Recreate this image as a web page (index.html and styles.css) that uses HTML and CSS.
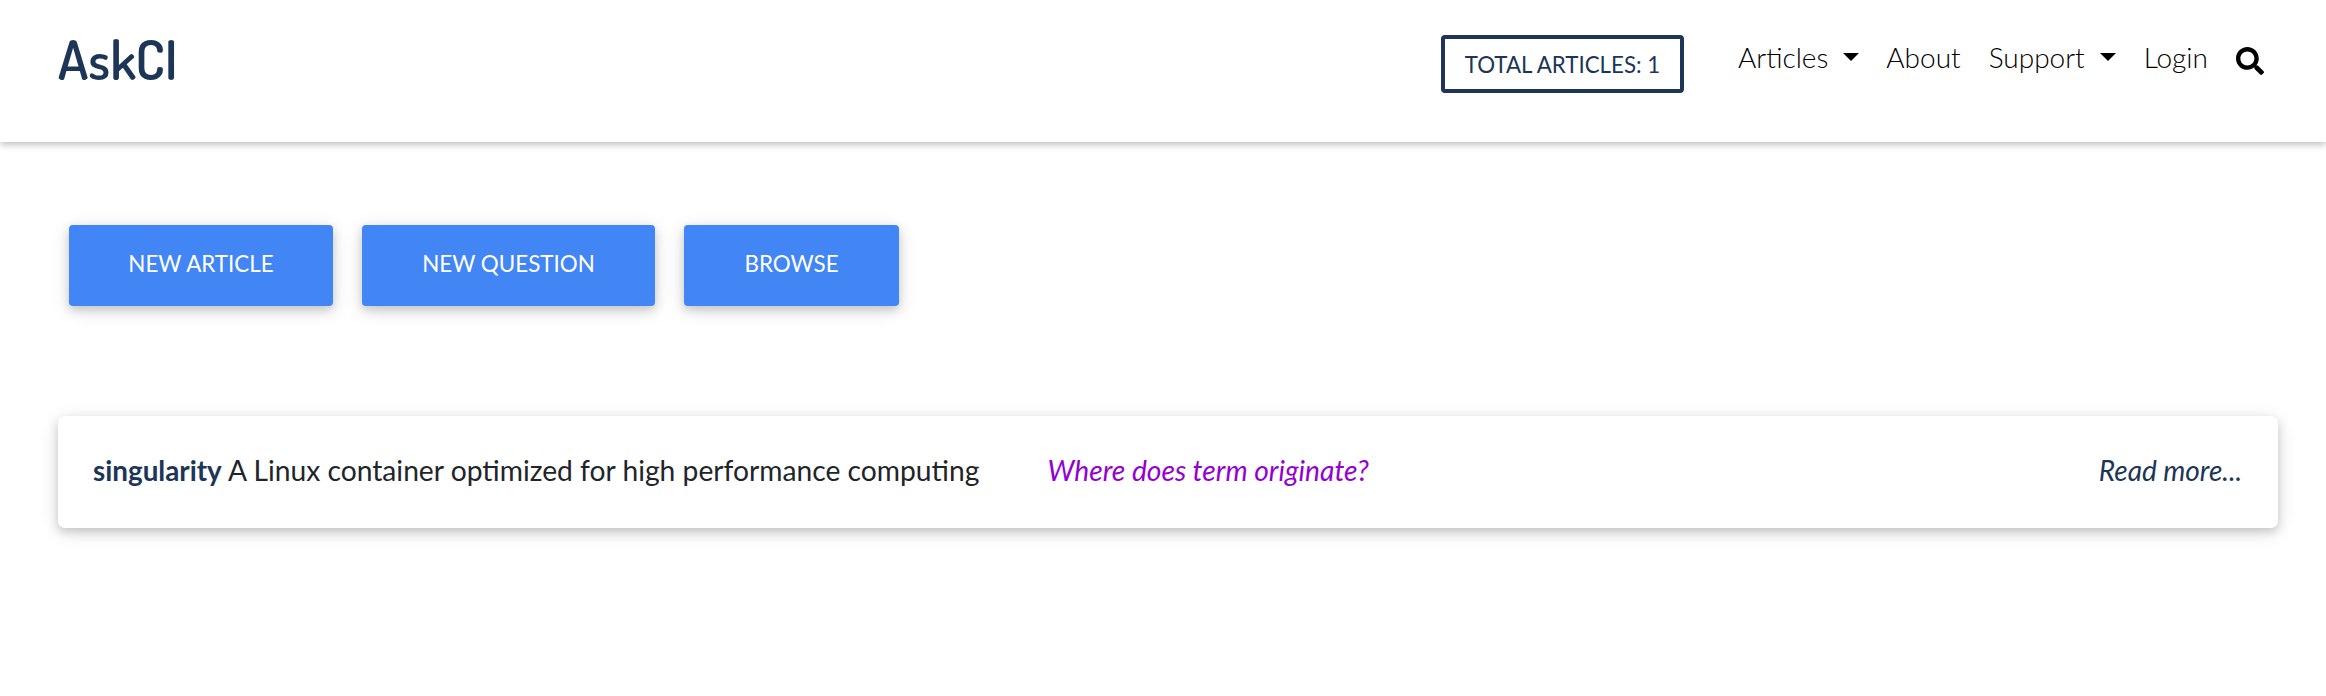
FILE: index.html
```html
<!DOCTYPE html>
<html lang="en"><head><meta charset="utf-8"><title>AskCI</title><link rel="stylesheet" href="styles.css"></head>
<body>
<header class="navbar">
<a class="brand">AskCI</a>
<nav class="nav">
<span class="total">TOTAL ARTICLES: 1</span>
<a class="link articles">Articles<i class="caret"></i></a>
<a class="link about">About</a>
<a class="link support">Support<i class="caret"></i></a>
<a class="link login">Login</a>
<svg class="search" viewBox="0 0 512 512"><path d="M505 442.700 405.300 343c-4.500-4.500-10.600-7-17-7H372c27.600-35.300 44-79.700 44-128C416 93.100 322.900 0 208 0S0 93.100 0 208s93.100 208 208 208c48.300 0 92.700-16.400 128-44v16.300c0 6.400 2.500 12.500 7 17l99.700 99.700c9.400 9.400 24.600 9.400 33.900 0l28.300-28.300c9.400-9.400 9.400-24.600.1-34zM208 336c-70.700 0-128-57.200-128-128 0-70.700 57.200-128 128-128 70.700 0 128 57.200 128 128 0 70.700-57.200 128-128 128z"/></svg>
</nav>
</header>
<main class="main">
<div class="actions"><a class="btn b1">NEW ARTICLE</a><a class="btn b2">NEW QUESTION</a><a class="btn b3">BROWSE</a></div>
<article class="card"><p class="summary"><b class="term">singularity</b> A Linux container optimized for high performance computing</p><em class="question">Where does term originate?</em><em class="more">Read more...</em></article>
</main>
</body></html>
```
FILE: styles.css
```css
* { box-sizing: border-box; }
body { margin: 0; min-height: 696px; font-family: Lato, sans-serif; background: #fff; color: #212529; }
.navbar { height: 142px; padding: 0 62px 0 58px; display: flex; justify-content: space-between; align-items: flex-start; box-shadow: 0 3px 6px rgba(0,0,0,.18), 0 2px 10px rgba(0,0,0,.08); }
.brand { font: 600 54px/60px Dosis, Lato, sans-serif; color: #1d3557; margin-top: 29px; }
.nav { display: flex; align-items: flex-start; padding-top: 35px; }
.total { width: 243px; height: 58px; border: 4px solid #1d3557; border-radius: 4px; color: #1d3557; font-size: 22.3px; line-height: 51px; text-align: center; margin-right: 54px; }
.link { font-size: 28px; font-weight: 300; line-height: 44px; color: #000; display: flex; align-items: center; margin-right: 28px; white-space: nowrap; }
.articles { margin-right: 27px; }
.caret { border: 8px solid transparent; border-top-color: #000; border-bottom: 0; margin-left: 15px; }
.search { width: 28px; height: 28px; margin-top: 12px; }
.main { padding: 83px 48px 80px 58px; }
.actions { display: flex; gap: 29px; padding-left: 11px; }
.btn { height: 81px; background: #4285f4; color: #fff; border-radius: 4px; font-size: 22.4px; line-height: 77px; text-align: center; box-shadow: 0 4px 10px rgba(0,0,0,.16), 0 4px 20px rgba(0,0,0,.12); }
.b1 { width: 264px; } .b2 { width: 293px; } .b3 { width: 215px; }
.card { margin-top: 110px; height: 112px; border-radius: 7px; display: flex; align-items: center; padding: 0 36px 4px 35px; font-size: 28px; box-shadow: 0 4px 10px rgba(0,0,0,.16), 0 4px 20px rgba(0,0,0,.12); }
.summary { margin: 0; font-size: 28.22px; }
.term { color: #1d3557; font-size: 27.8px; }
.question { color: #9400d3; margin-left: 68px; font-size: 28.2px; }
.more { color: #1d3557; margin-left: auto; }
```
